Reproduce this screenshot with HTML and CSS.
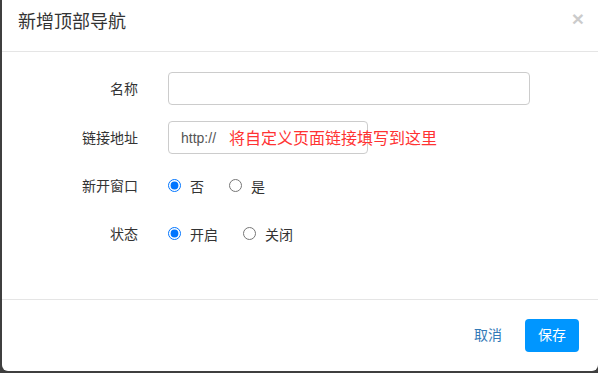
FILE: index.html
```html
<!DOCTYPE html>
<html lang="zh-CN">
<head>
<meta charset="utf-8">
<title>新增顶部导航</title>
<link rel="stylesheet" href="styles.css">
</head>
<body>
<div class="modal">
  <div class="modal-header">
    <h4 class="modal-title">新增顶部导航</h4>
    <button class="close" type="button">×</button>
  </div>
  <div class="modal-body">
    <div class="form-row first">
      <label class="form-label">名称</label>
      <div class="form-control-wrap">
        <input class="input input-wide" type="text">
      </div>
    </div>
    <div class="form-row">
      <label class="form-label">链接地址</label>
      <div class="form-control-wrap link-wrap">
        <input class="input input-link" type="text" value="http://">
        <span class="annotation">将自定义页面链接填写到这里</span>
      </div>
    </div>
    <div class="form-row">
      <label class="form-label">新开窗口</label>
      <div class="form-control-wrap radios">
        <label class="radio"><input type="radio" name="target" checked><span>否</span></label>
        <label class="radio"><input type="radio" name="target"><span>是</span></label>
      </div>
    </div>
    <div class="form-row">
      <label class="form-label">状态</label>
      <div class="form-control-wrap radios">
        <label class="radio"><input type="radio" name="status" checked><span>开启</span></label>
        <label class="radio"><input type="radio" name="status"><span>关闭</span></label>
      </div>
    </div>
  </div>
  <div class="modal-footer">
    <button class="btn btn-link" type="button">取消</button>
    <button class="btn btn-primary" type="button">保存</button>
  </div>
</div>
</body>
</html>
```
FILE: styles.css
```css
* { box-sizing: border-box; }
html, body { margin: 0; padding: 0; }
body {
  width: 598px;
  height: 373px;
  background: #3f3f3f;
  font-family: "Liberation Sans", "Noto Sans CJK SC", sans-serif;
  font-size: 14px;
  color: #333;
  overflow: hidden;
}
.modal {
  margin-left: 2px;
  width: 596px;
  height: 371px;
  background: #fff;
  border-radius: 0 0 6px 6px;
  display: flex;
  flex-direction: column;
}
.modal-header {
  height: 52px;
  padding: 9px 16px 0 16px;
  border-bottom: 1px solid #e5e5e5;
  display: flex;
  justify-content: space-between;
  align-items: flex-start;
}
.modal-title {
  margin: 0;
  font-size: 18px;
  font-weight: normal;
  line-height: 26px;
  color: #333;
}
.close {
  border: 0;
  background: none;
  padding: 0;
  margin-top: 0;
  margin-right: -2px;
  font-family: "Liberation Sans", sans-serif;
  font-size: 21px;
  font-weight: bold;
  line-height: 20px;
  color: #000;
  opacity: .2;
}
.modal-body {
  height: 247px;
  padding-top: 20px;
  display: flex;
  flex-direction: column;
  gap: 15px;
}
.form-row {
  display: flex;
  align-items: center;
  height: 33px;
}
.form-row.first { margin-bottom: 1px; }
.form-label {
  width: 136px;
  text-align: right;
  margin-right: 30px;
  line-height: 20px;
}
.form-control-wrap {
  display: flex;
  align-items: center;
  position: relative;
}
.input {
  height: 33px;
  border: 1px solid #ccc;
  border-radius: 4px;
  padding: 6px 12px;
  font-family: "Liberation Sans", "Noto Sans CJK SC", sans-serif;
  font-size: 14px;
  color: #555;
  background: #fff;
}
.input-wide { width: 362px; }
.input-link { width: 200px; }
.annotation {
  position: absolute;
  left: 61px;
  top: 50%;
  transform: translateY(-50%);
  margin-top: -1px;
  white-space: nowrap;
  font-size: 16px;
  color: #ff3333;
}
.radios { gap: 25px; }
.radio {
  display: flex;
  align-items: center;
  gap: 9px;
}
.radio input {
  margin: 0;
  width: 13px;
  height: 13px;
}
.modal-footer {
  flex: 1;
  border-top: 1px solid #e5e5e5;
  padding: 19px 19px 0 0;
  display: flex;
  justify-content: flex-end;
  align-items: flex-start;
  gap: 10px;
}
.btn {
  height: 33px;
  border: 0;
  border-radius: 4px;
  padding: 0 13px;
  font-family: "Liberation Sans", "Noto Sans CJK SC", sans-serif;
  font-size: 14px;
  line-height: 33px;
  background: none;
}
.btn-link { color: #337ab7; }
.btn-primary {
  width: 54px;
  background: #0096ff;
  color: #fff;
}
```
